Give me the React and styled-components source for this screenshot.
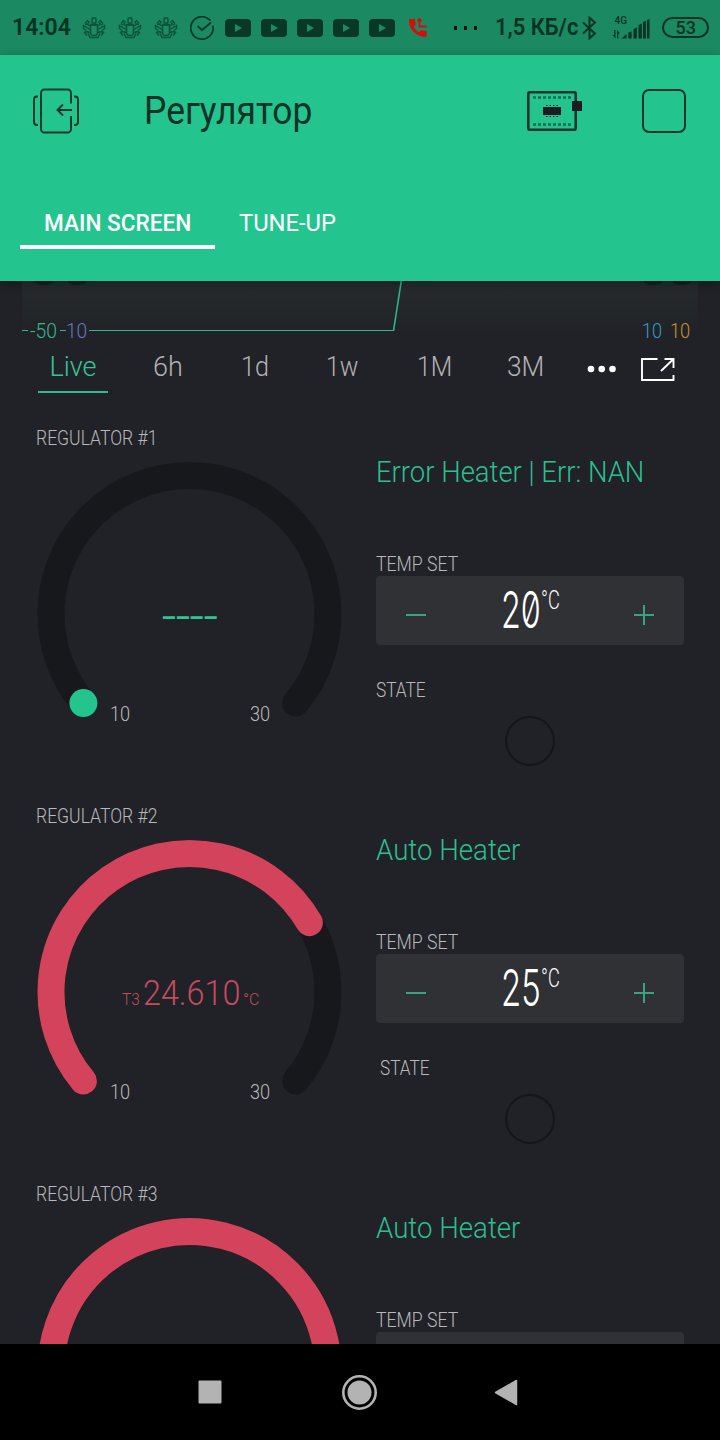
import React, { useLayoutEffect, useRef, useState } from "react";
import styled, { createGlobalStyle } from "styled-components";

const GREEN = "#24c48e";
const RED = "#d3435c";
const INK = "#063322";

const GlobalStyle = createGlobalStyle`
  * { box-sizing: border-box; }
  body { margin: 0; background: #212227; font-family: Roboto, "Noto Sans", sans-serif; }
  button { border: 0; padding: 0; margin: 0; background: none; font: inherit; color: inherit; }
  svg { display: block; }
`;

/* Text squeezed horizontally so it occupies exactly the given width. */
const FitBox = styled.span`
  display: inline-block;
  flex: none;
  white-space: nowrap;
  font-size: ${(p) => p.$size}px;
  font-weight: ${(p) => p.$weight};
  font-family: ${(p) => p.$family || "inherit"};
  font-feature-settings: ${(p) => p.$features || "normal"};
  color: ${(p) => p.$color || "inherit"};
`;
const FitInner = styled.span`
  display: inline-block;
  transform-origin: left center;
`;

function Fit({ width, size, weight = 300, color, family, features, children }) {
  const ref = useRef(null);
  const [scale, setScale] = useState(1);
  useLayoutEffect(() => {
    const measure = () => ref.current && setScale(width / ref.current.offsetWidth);
    measure();
    document.fonts.ready.then(measure);
  }, [width]);
  return (
    <FitBox $size={size} $weight={weight} $color={color} $family={family} $features={features} style={{ width }}>
      <FitInner ref={ref} style={{ transform: `scaleX(${scale})` }}>{children}</FitInner>
    </FitBox>
  );
}

const Screen = styled.div`
  width: 720px;
  height: 1440px;
  display: flex;
  flex-direction: column;
  overflow: hidden;
  background: #212227;
`;

/* ---------- status bar ---------- */

const StatusBar = styled.div`
  height: 55px;
  flex: none;
  display: flex;
  align-items: center;
  padding: 0 11px 0 12px;
  background: #1b8962;
  color: ${INK};
  line-height: 56px;
`;
const Notifications = styled.div`
  display: flex;
  align-items: center;
  margin-left: 5px;
`;
const IconCell = styled.div`
  width: 36px;
  display: flex;
  justify-content: center;
`;
const Dots = styled.div`
  display: flex;
  gap: 7px;
  margin: 0 18px 0 18px;
`;
const SquareDot = styled.i`
  width: 3px;
  height: 4px;
  background: #04170f;
`;
const Connectivity = styled.div`
  display: flex;
  align-items: center;
  gap: 15px;
  margin-left: 4px;
`;
const Battery = styled.div`
  width: 47px;
  height: 21px;
  margin-left: auto;
  border: 2px solid ${INK};
  border-radius: 11px;
  display: flex;
  align-items: center;
  justify-content: center;
  line-height: 18px;
`;

const BugIcon = () => (
  <svg width="24" height="22" viewBox="0 0 24 22" fill="none" stroke="#0b5238" strokeWidth="1.4">
    <rect x="10" y="1" width="4" height="5" rx="1" />
    <path d="M8.500 8h7v7.500c0 2-1.500 3-3.500 3s-3.500-1-3.500-3z" />
    <path d="M8 7.500h8M8 9 5.500 7.500 7 5 5.500 3.500 3.500 6l.5 2M16 9l2.500-1.500L17 5l1.500-1.500 2 2.500-.5 2" />
    <path d="M8 12.500 4 10 1.500 8.500v3l2.500 2M16 12.500l4-2.500 2.500-1.500v3l-2.500 2" />
    <path d="m8 15.500-3.500-1-2 1 2.500 3M16 15.500l3.500-1 2 1-2.500 3M6 16.500l2 4h8l2-4" />
  </svg>
);

const CheckIcon = () => (
  <svg width="24" height="24" viewBox="0 0 24 24" fill="none" stroke="#073b28" strokeWidth="1.8" strokeLinecap="round">
    <path d="M19.800 4A11.200 11.200 0 1 0 23 10.500" />
    <path d="m8 10.500 4 3.500 8.500-7" />
  </svg>
);

const VideoIcon = () => (
  <svg width="26" height="18" viewBox="0 0 26 18">
    <rect width="26" height="18" rx="4" fill="#0a3828" />
    <path d="M10 5v8l7-4z" fill="#1b8962" />
  </svg>
);

const MissedCallIcon = () => (
  <svg width="18" height="20" viewBox="0 0 18 20">
    <g transform="translate(-2.300 -1.200) scale(.93)">
      <path
        fill="#d80d0b"
        stroke="#d80d0b"
        strokeWidth="1.200"
        d="M6.620 10.790c1.440 2.830 3.760 5.140 6.590 6.590l2.200-2.200c.27-.27.67-.36 1.020-.24 1.120.37 2.330.57 3.570.57.55 0 1 .45 1 1V20c0 .55-.45 1-1 1-9.390 0-17-7.610-17-17 0-.55.45-1 1-1h3.500c.55 0 1 .45 1 1 0 1.250.2 2.450.57 3.570.11.35.03.74-.25 1.020z"
      />
    </g>
    <path d="M10.500 1.500V8.500H17.500M8.500 3.200l2-2.200 2 2.200" fill="none" stroke="#d80d0b" strokeWidth="1.800" />
  </svg>
);

const BluetoothIcon = () => (
  <svg width="15" height="24" viewBox="0 0 15 24" fill="none" stroke={INK} strokeWidth="1.900">
    <path d="M1 6.500 13 17.500 7.500 22.300V1.700L13 6.500 1 17.500" />
  </svg>
);

const SignalIcon = () => (
  <svg width="39" height="24" viewBox="0 0 39 24" fill={INK}>
    <text x="2.500" y="7.500" fontSize="10" fontWeight="500" fontFamily="Roboto, sans-serif">4G</text>
    <path d="M2.300 14h1.200v8.500L.4 19h1.900zM6.300 22.500H5.100V14l3 3.500H6.300zM9.500 22.500l5-4.500v4.500zM16.300 16.500l3.300-1v7h-3.300zM21.500 13l3.300-1.500v11h-3.300zM26.500 9l3.300-1.500v15h-3.300zM31 6l2.800-1.200v17.700H31zM35 4l2.500-1.200v19.700H35z" />
  </svg>
);

/* ---------- header ---------- */

const Header = styled.header`
  height: 226px;
  flex: none;
  position: relative;
  z-index: 1;
  background: ${GREEN};
  box-shadow: 0 3px 10px rgba(0, 0, 0, 0.3);
`;
const TitleRow = styled.div`
  height: 112px;
  display: flex;
  align-items: center;
  padding: 0 34px 0 32px;
`;
const TitleText = styled.h1`
  margin: 0 auto 0 64px;
  font-weight: 400;
  font-size: 38px;
  line-height: 112px;
`;
const ChipButton = styled.button`
  margin-right: 59px;
`;
const StopButton = styled.button`
  width: 44px;
  height: 44px;
  border: 2px solid #10362b;
  border-radius: 7px;
`;
const TabRow = styled.nav`
  display: flex;
  padding: 28px 20px 0;
`;
const Tab = styled.button`
  height: 54px;
  padding: 0 24px;
  line-height: 56px;
  text-align: left;
  color: #fff;
  border-bottom: 4px solid ${(p) => (p.$active ? "#fff" : "transparent")};
`;

const ExitIcon = () => (
  <svg width="48" height="46" viewBox="0 0 48 46" fill="none" stroke="#10362b" strokeWidth="1.900">
    <path d="M39 15.500V5a3.500 3.500 0 0 0-3.500-3.500h-23A3.500 3.500 0 0 0 9 5v36a3.500 3.500 0 0 0 3.500 3.500h23A3.500 3.500 0 0 0 39 41V28" />
    <path d="M6 8.500H5A3 3 0 0 0 2 11.500v22.500a3 3 0 0 0 3 3h1M42 8.500h1a3 3 0 0 1 3 3V34a3 3 0 0 1-3 3h-1" />
    <path d="M40 22H26M31 16.500 25.500 22l5.500 5.500" />
  </svg>
);

const ChipIcon = () => (
  <svg width="56" height="40" viewBox="0 0 56 40">
    <rect x="1.300" y="1.300" width="47.400" height="37.400" rx="1.500" fill="none" stroke="#10362b" strokeWidth="2.600" />
    <path d="M6 6.500h40M6 33.500h40" stroke="#14694d" strokeWidth="2.600" strokeDasharray="3 2" />
    <rect x="16" y="16" width="18" height="8" fill="#1b1c22" />
    <path d="M19 14.500h14M19 25.500h14" stroke="#1b1c22" strokeWidth="1" strokeDasharray="1.500 2" />
    <rect x="45" y="10" width="10" height="10" fill="#1b1c22" />
  </svg>
);

/* ---------- chart ---------- */

const Content = styled.main`
  flex: 1;
  min-height: 0;
  overflow: hidden;
`;
const Chart = styled.div`
  height: 62px;
  position: relative;
`;
const AxisLabel = styled.span`
  position: absolute;
  top: 39px;
  left: ${(p) => p.$left}px;
  line-height: 22px;
`;
const RangeRow = styled.div`
  height: 79px;
  display: grid;
  grid-template-columns: 94px 96px 78px 96px 89px 92px 62px 49px;
  padding-left: 26px;
  align-items: start;
  justify-items: center;
`;
const RangeTab = styled.button`
  min-width: ${(p) => (p.$active ? "70px" : "0")};
  height: 50px;
  line-height: 48px;
  color: ${(p) => (p.$active ? "#36c597" : "#b3b3b5")};
  border-bottom: 2px solid ${(p) => (p.$active ? "#36b88f" : "transparent")};
`;
const RangeAction = styled.button`
  height: 52px;
  display: flex;
  align-items: center;
`;

const RANGES = [
  { label: "Live", width: 47, active: true },
  { label: "6h", width: 30 },
  { label: "1d", width: 28 },
  { label: "1w", width: 32 },
  { label: "1M", width: 35 },
  { label: "3M", width: 37 },
];

function ChartStrip() {
  return (
    <Chart>
      <svg width="720" height="62" viewBox="0 0 720 62">
        <defs>
          <linearGradient id="plot" x1="0" y1="0" x2="0" y2="1">
            <stop offset="0" stopColor="#262b2d" />
            <stop offset="1" stopColor="#212327" />
          </linearGradient>
        </defs>
        <rect x="22" width="676" height="50" fill="url(#plot)" />
        <g fill="#191b1e">
          <ellipse cx="44" cy="1" rx="9" ry="3" />
          <ellipse cx="77" cy="1" rx="9" ry="3" />
          <ellipse cx="653" cy="1" rx="9" ry="3" />
          <ellipse cx="682" cy="1" rx="9" ry="3" />
        </g>
        <path d="M22 49.500h6M60 49.500h6M89 49.500h304.500" fill="none" stroke="#2fb68a" />
        <path d="M393.500 50 401.300 0" fill="none" stroke="#2fb68a" strokeWidth="1.600" />
      </svg>
      <AxisLabel $left={30}><Fit width={27} size={20} color="#36b88f">-50</Fit></AxisLabel>
      <AxisLabel $left={66}><Fit width={21} size={20} color="#6675c4">10</Fit></AxisLabel>
      <AxisLabel $left={642}><Fit width={20} size={20} color="#2f9fcf">10</Fit></AxisLabel>
      <AxisLabel $left={670}><Fit width={20} size={20} color="#d0922c">10</Fit></AxisLabel>
    </Chart>
  );
}

/* ---------- regulator ---------- */

const Regulator = styled.section`
  height: 378px;
  display: grid;
  grid-template-columns: 308px 308px;
  column-gap: 32px;
  padding-left: 36px;
`;
const Column = styled.div`
  display: flex;
  flex-direction: column;
`;
const GaugeLabel = styled.div`
  line-height: 32px;
  height: 30px;
`;
const GaugeBox = styled.div`
  position: relative;
  height: 290px;
`;
const Reading = styled.div`
  position: absolute;
  left: 0;
  top: ${(p) => (p.$empty ? 140 : 139)}px;
  width: 308px;
  height: 50px;
  line-height: 50px;
  display: flex;
  justify-content: center;
  align-items: baseline;
  gap: 3px;
  color: ${(p) => p.$color};
`;
const Limits = styled.div`
  position: absolute;
  left: 74px;
  top: 250px;
  width: 160px;
  display: flex;
  justify-content: space-between;
  line-height: 24px;
`;
const Message = styled.div`
  margin-top: 30px;
  height: 40px;
  line-height: 40px;
`;
const FieldLabel = styled.div`
  height: 25px;
  line-height: 26px;
  margin-top: ${(p) => p.$gap}px;
  padding-left: ${(p) => p.$indent || 0}px;
`;
const Stepper = styled.div`
  height: 69px;
  padding: 0 29px;
  display: flex;
  align-items: center;
  justify-content: space-between;
  background: #303134;
  border-radius: 4px;
`;
const SetValue = styled.div`
  display: flex;
  height: 69px;
  line-height: 68px;
  color: #fff;
`;
const Degree = styled.sup`
  height: 50px;
  line-height: 49px;
  vertical-align: top;
  font-size: inherit;
`;
const Led = styled.div`
  width: 50px;
  height: 50px;
  margin: 14px auto 0;
  border: 2px solid #15161a;
  border-radius: 50%;
`;

const CX = 153.500;
const CY = 162;
const R = 138.500;
const pointAt = (fraction) => {
  const a = ((140 + 260 * fraction) * Math.PI) / 180;
  return [CX + R * Math.cos(a), CY + R * Math.sin(a)];
};
const arc = (fraction) => {
  const [x0, y0] = pointAt(0);
  const [x1, y1] = pointAt(fraction);
  return `M${x0} ${y0}A${R} ${R} 0 ${260 * fraction > 180 ? 1 : 0} 1 ${x1} ${y1}`;
};

function Gauge({ fraction }) {
  const [x, y] = pointAt(0);
  return (
    <svg width="308" height="290" viewBox="0 0 308 290" fill="none" strokeWidth="27" strokeLinecap="round">
      <path d={arc(1)} stroke="#17181b" />
      {fraction > 0 ? <path d={arc(fraction)} stroke={RED} /> : <circle cx={x} cy={y} r="14" fill={GREEN} />}
    </svg>
  );
}

const StepButton = styled.button`
  width: 22px;
  padding-top: 8px;
`;
const StepIcon = ({ plus }) => (
  <svg width="22" height="22" viewBox="0 0 22 22" stroke="#37a37f" strokeWidth="2">
    <path d={plus ? "M1 11h20M11 1v20" : "M1 11h20"} />
  </svg>
);

const LABEL = "#b9b9bb";

function RegulatorCard({ name, fraction, reading, message, messageWidth, target, indent, limits }) {
  return (
    <Regulator>
      <Column>
        <GaugeLabel><Fit width={121} size={20} color={LABEL}>{name}</Fit></GaugeLabel>
        <GaugeBox>
          <Gauge fraction={fraction} />
          {reading === "----" && (
            <Reading $empty $color="#2ec494"><Fit width={56} size={36} weight={400}>----</Fit></Reading>
          )}
          {reading && reading !== "----" && (
            <Reading $color="#c34c60">
              <Fit width={18} size={17}>T3</Fit>
              <Fit width={97} size={35}>{reading}</Fit>
              <Fit width={16} size={17}>°C</Fit>
            </Reading>
          )}
          {limits && (
            <Limits>
              <Fit width={20} size={20} color={LABEL}>10</Fit>
              <Fit width={20} size={20} color={LABEL}>30</Fit>
            </Limits>
          )}
        </GaugeBox>
      </Column>
      <Column>
        <Message><Fit width={messageWidth} size={29} color="#2cbf90">{message}</Fit></Message>
        <FieldLabel $gap={59}><Fit width={82} size={20} color={LABEL}>TEMP SET</Fit></FieldLabel>
        <Stepper>
          {target && (
            <>
              <StepButton aria-label="Decrease"><StepIcon /></StepButton>
              <SetValue>
                <Fit width={40} size={51} family="Inter, sans-serif" features='"zero"'>{target}</Fit>
                <Degree><Fit width={19} size={25}>°C</Fit></Degree>
              </SetValue>
              <StepButton aria-label="Increase"><StepIcon plus /></StepButton>
            </>
          )}
        </Stepper>
        {target && (
          <>
            <FieldLabel $gap={32} $indent={indent}><Fit width={50} size={20} color={LABEL}>STATE</Fit></FieldLabel>
            <Led />
          </>
        )}
      </Column>
    </Regulator>
  );
}

/* ---------- navigation bar ---------- */

const NavBar = styled.footer`
  height: 96px;
  flex: none;
  display: grid;
  grid-template-columns: 146px 153px 140px;
  padding-left: 137px;
  align-items: center;
  justify-items: center;
  background: #000;
`;

export default function App() {
  return (
    <Screen>
      <GlobalStyle />
      <StatusBar>
        <Fit width={59} size={23} weight={600}>14:04</Fit>
        <Notifications>
          {[0, 1, 2].map((i) => <IconCell key={i}><BugIcon /></IconCell>)}
          <IconCell><CheckIcon /></IconCell>
          {[0, 1, 2, 3, 4].map((i) => <IconCell key={i}><VideoIcon /></IconCell>)}
          <IconCell><MissedCallIcon /></IconCell>
        </Notifications>
        <Dots><SquareDot /><SquareDot /><SquareDot /></Dots>
        <Fit width={83} size={23} weight={600}>1,5 КБ/с</Fit>
        <Connectivity><BluetoothIcon /><SignalIcon /></Connectivity>
        <Battery><Fit width={20} size={18} weight={500}>53</Fit></Battery>
      </StatusBar>

      <Header>
        <TitleRow>
          <ExitIcon />
          <TitleText><Fit width={168} size={38} weight={400} color="#0d3327">Регулятор</Fit></TitleText>
          <ChipButton aria-label="Device"><ChipIcon /></ChipButton>
          <StopButton aria-label="Stop" />
        </TitleRow>
        <TabRow>
          <Tab $active><Fit width={147} size={24} weight={500}>MAIN SCREEN</Fit></Tab>
          <Tab><Fit width={97} size={24} weight={400}>TUNE-UP</Fit></Tab>
        </TabRow>
      </Header>

      <Content>
        <ChartStrip />
        <RangeRow>
          {RANGES.map((r) => (
            <RangeTab key={r.label} $active={r.active}><Fit width={r.width} size={27}>{r.label}</Fit></RangeTab>
          ))}
          <RangeAction aria-label="More">
            <svg width="30" height="8" viewBox="0 0 30 8" fill="#fff">
              <circle cx="4" cy="4" r="3.300" /><circle cx="14.700" cy="4" r="3.300" /><circle cx="25.500" cy="4" r="3.300" />
            </svg>
          </RangeAction>
          <RangeAction aria-label="Expand">
            <svg width="34" height="24" viewBox="0 0 34 24" fill="none" stroke="#fff" strokeWidth="1.900">
              <path d="M16.500 2H1v21h31.500v-5M23.500 2h9v9M32 2.500 20 14" />
            </svg>
          </RangeAction>
        </RangeRow>
        <RegulatorCard name="REGULATOR #1" fraction={0} reading="----" message="Error Heater | Err: NAN" messageWidth={268} target="20" limits />
        <RegulatorCard name="REGULATOR #2" fraction={0.7305} reading="24.610" message="Auto Heater" messageWidth={144} target="25" indent={4} limits />
        <RegulatorCard name="REGULATOR #3" fraction={0.9} message="Auto Heater" messageWidth={144} />
      </Content>

      <NavBar>
        <svg width="24" height="24" viewBox="0 0 24 24"><rect x=".5" y=".5" width="23" height="23" rx="1" fill="#b3b3b3" /></svg>
        <svg width="36" height="36" viewBox="0 0 36 36">
          <circle cx="17.500" cy="18.500" r="16.200" fill="none" stroke="#b3b3b3" strokeWidth="2.600" />
          <circle cx="17.500" cy="18.500" r="12" fill="#b3b3b3" />
        </svg>
        <svg width="24" height="28" viewBox="0 0 24 28"><path d="M22.500 2.500v24L1.500 14.500z" fill="#b3b3b3" stroke="#b3b3b3" strokeWidth="1.500" strokeLinejoin="round" /></svg>
      </NavBar>
    </Screen>
  );
}
